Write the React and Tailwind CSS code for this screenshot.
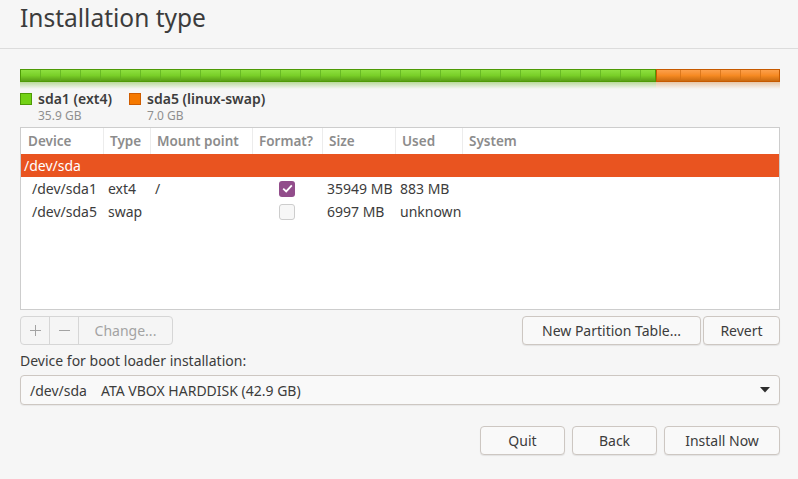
import React from "react";

const font = { fontFamily: '"Noto Sans", "Open Sans", sans-serif' };

const cols = ["w-[82px]", "w-[47px]", "w-[102px]", "w-[70px]", "w-[73px]", "w-[67px]", "flex-1"];
const heads = ["Device", "Type", "Mount point", "Format?", "Size", "Used", "System"];

const rows = [
    { dev: "/dev/sda1", type: "ext4", mount: "/", format: true, size: "35949 MB", used: "883 MB" },
    { dev: "/dev/sda5", type: "swap", mount: "", format: false, size: "6997 MB", used: "unknown" },
];

const Segments = ({ count, first = 20, color }) => (
    <div className="flex h-full">
        {Array.from({ length: count }).map((_, i) => (
            <div
                key={i}
                className={`h-full shrink-0 border-r ${color}`}
                style={{ width: i === 0 ? first : 20 }}
            />
        ))}
    </div>
);

const Check = ({ on }) =>
    on ? (
        <div className="w-[16px] h-[16px] rounded-[3px] bg-[#924d8b] flex items-center justify-center">
            <svg width="11" height="9" viewBox="0 0 11 9">
                <path d="M1.2 4.6 L4.2 7.4 L9.8 1.4" fill="none" stroke="white" strokeWidth="1.8" />
            </svg>
        </div>
    ) : (
        <div className="w-[16px] h-[16px] rounded-[3px] border border-[#cdcdcd] bg-[#f7f7f7]" />
    );

const Button = ({ children, className = "" }) => (
    <button
        className={`h-[29px] rounded-[4px] border border-[#cdc7c2] bg-[#f9f9f9] shadow-[0_1px_1px_rgba(0,0,0,0.08)] text-[14px] text-[#3c3c3c] ${className}`}
    >
        {children}
    </button>
);

const Legend = ({ name, size, box }) => (
    <div className="flex gap-[6px]">
        <div className={`w-[12px] h-[12px] mt-[4px] border ${box}`} />
        <div>
            <div className="text-[14px] leading-[19px] font-semibold">{name}</div>
            <div className="text-[12px] leading-[16px] text-[#8f8f8f]">{size}</div>
        </div>
    </div>
);

export default function App() {
    return (
        <div className="w-[798px] h-[479px] bg-[#f6f6f6] overflow-hidden text-[#3c3c3c]" style={font}>
            <div className="h-[49px] border-b border-[#dcdcdc] px-5">
                <h1 className="text-[24.5px] leading-[35px] text-[#3c3c3c]">Installation type</h1>
            </div>

            <div className="pl-5 pr-[18px] pt-5">
                {/* partition bar */}
                <div className="flex h-[13px]">
                    <div className="w-[636px] h-full border border-[#4e9a06] bg-gradient-to-b from-[#8ee03f] via-[#79cf28] to-[#5a9e17] overflow-hidden">
                        <Segments count={32} color="border-[#5fae20]/70" />
                    </div>
                    <div className="w-[124px] h-full border border-[#c65a00] bg-gradient-to-b from-[#fca04a] via-[#f68a22] to-[#c96a10] overflow-hidden">
                        <Segments count={6} first={24} color="border-[#d16e12]/70" />
                    </div>
                </div>
                <div className="flex h-[7px]">
                    <div className="w-[636px] bg-gradient-to-b from-[#b9d99a] to-[#f6f6f6]" />
                    <div className="w-[124px] bg-gradient-to-b from-[#e6c7a8] to-[#f6f6f6]" />
                </div>

                {/* legend */}
                <div className="flex gap-[17px]">
                    <Legend name="sda1 (ext4)" size="35.9 GB" box="bg-[#73d216] border-[#4e9a06]" />
                    <Legend name="sda5 (linux-swap)" size="7.0 GB" box="bg-[#f57900] border-[#ce5c00]" />
                </div>

                {/* table */}
                <div className="mt-[3px] h-[183px] border border-[#cdcdcd] bg-white">
                    <div className="flex h-[26px] items-center">
                        {heads.map((h, i) => (
                            <div
                                key={h}
                                className={`${cols[i]} h-full flex items-center text-[13.5px] font-semibold text-[#8c8c8c] ${i > 0 ? "border-l border-[#ececec] pl-[6px]" : "pl-[7px]"}`}
                            >
                                {h}
                            </div>
                        ))}
                    </div>
                    <div className="h-[23px] bg-[#e95420] text-white text-[14px] pl-[3px] flex items-center">/dev/sda</div>
                    {rows.map((r) => (
                        <div key={r.dev} className="flex h-[23px] items-center text-[14px]">
                            <div className={`${cols[0]} pl-[11px]`}>{r.dev}</div>
                            <div className={`${cols[1]} pl-[5px]`}>{r.type}</div>
                            <div className={`${cols[2]} pl-[5px]`}>{r.mount}</div>
                            <div className={`${cols[3]} flex justify-center`}>
                                <Check on={r.format} />
                            </div>
                            <div className={`${cols[4]} pl-[5px]`}>{r.size}</div>
                            <div className={`${cols[5]} pl-[5px]`}>{r.used}</div>
                            <div className={cols[6]} />
                        </div>
                    ))}
                </div>

                {/* table actions */}
                <div className="flex justify-between mt-[6px]">
                    <div className="flex h-[29px] rounded-[4px] border border-[#d6d6d6] bg-[#f5f5f5] text-[#a3a3a3] text-[14px]">
                        <div className="w-[29px] flex items-center justify-center border-r border-[#d6d6d6]">
                            <svg width="11" height="11" viewBox="0 0 11 11">
                                <path d="M5.5 0 V11 M0 5.5 H11" stroke="#a3a3a3" strokeWidth="1" />
                            </svg>
                        </div>
                        <div className="w-[29px] flex items-center justify-center border-r border-[#d6d6d6]">
                            <svg width="11" height="11" viewBox="0 0 11 11">
                                <path d="M0 5.5 H11" stroke="#a3a3a3" strokeWidth="1" />
                            </svg>
                        </div>
                        <div className="w-[93px] flex items-center justify-center">Change...</div>
                    </div>
                    <div className="flex gap-[2px]">
                        <Button className="w-[179px]">New Partition Table...</Button>
                        <Button className="w-[77px]">Revert</Button>
                    </div>
                </div>

                <div className="mt-[6px] text-[14px] leading-[20px]">Device for boot loader installation:</div>

                <div className="mt-[4px] h-[30px] rounded-[4px] border border-[#cdc7c2] bg-[#f9f9f9] shadow-[0_1px_1px_rgba(0,0,0,0.06)] flex items-center text-[14px] pl-[9px] pr-[9px]">
                    <span className="w-[71px]">/dev/sda</span>
                    <span className="flex-1">ATA VBOX HARDDISK (42.9 GB)</span>
                    <svg width="10" height="6" viewBox="0 0 10 6">
                        <path d="M0 0 H10 L5 5.5 Z" fill="#2e2e2e" />
                    </svg>
                </div>

                <div className="flex justify-end gap-[7px] mt-[21px]">
                    <Button className="w-[85px]">Quit</Button>
                    <Button className="w-[85px]">Back</Button>
                    <Button className="w-[116px]">Install Now</Button>
                </div>
            </div>
        </div>
    );
}
